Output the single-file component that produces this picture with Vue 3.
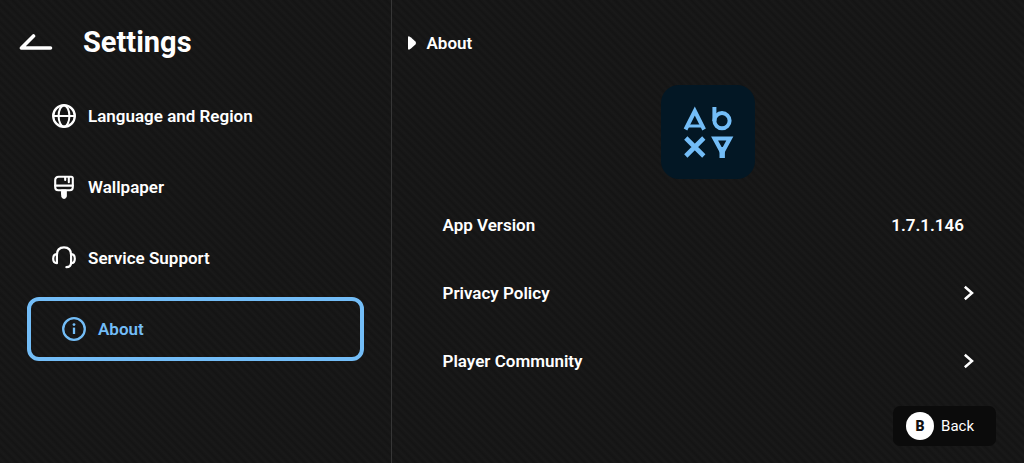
<script setup>
import { ref } from 'vue'

const items = [
  { id: 'language', label: 'Language and Region' },
  { id: 'wallpaper', label: 'Wallpaper' },
  { id: 'support', label: 'Service Support' },
  { id: 'about', label: 'About' },
]
const links = ['Privacy Policy', 'Player Community']
const selected = ref('about')
</script>

<template>
  <div class="screen">
    <aside class="sidebar">
      <header class="heading">
        <button class="back-arrow" type="button" aria-label="Go back">
          <svg width="34" height="18" viewBox="0 0 34 18" fill="none" stroke="currentColor" stroke-width="3.6" stroke-linecap="round" stroke-linejoin="round">
            <path d="M14.5 3 2.5 15H31.5" />
          </svg>
        </button>
        <h1>Settings</h1>
      </header>
      <nav class="menu" aria-label="Settings">
        <button
          v-for="item in items"
          :key="item.id"
          type="button"
          class="menu-item"
          :class="{ active: item.id === selected }"
          @click="selected = item.id"
        >
          <svg class="icon" viewBox="0 0 24 24" fill="none" stroke="currentColor" stroke-width="2.3" stroke-linecap="round" stroke-linejoin="round" aria-hidden="true">
            <g v-if="item.id === 'language'" stroke-width="2">
              <circle cx="12" cy="12" r="10.8" stroke-width="2.3" />
              <ellipse cx="12" cy="12" rx="5.4" ry="10.6" />
              <path d="M1.5 12H22.5" />
            </g>
            <g v-else-if="item.id === 'wallpaper'">
              <path d="M6.8 1.7H19.2Q20.8 1.7 20.8 3.3V12.2Q20.8 15.2 17.8 15.2H6.2Q3.2 15.2 3.2 12.2V5.3Q3.2 1.7 6.8 1.7Z" stroke-width="2.1" />
              <path d="M3.2 10.6H20.8M16.8 2V7.2M13.2 2V5" stroke-width="2.1" />
              <path d="M9.7 15H14.3V21.2Q14.3 23.4 12 23.4T9.7 21.2Z" fill="currentColor" stroke-width="1" />
            </g>
            <g v-else-if="item.id === 'support'" stroke-width="2.2">
              <path d="M4.9 8.2V17.2C2.4 17.2 1.2 15.8 1.2 12.7S2.4 8.2 4.9 8.2ZM19.1 8.2V17.2C21.6 17.2 22.8 15.8 22.8 12.7S21.6 8.2 19.1 8.2Z" />
              <path d="M4.9 9C4.9 4 7.7 1.4 12 1.4S19.1 4 19.1 9M19.1 16.5C19.1 19.6 17.2 21.2 14.4 21.2" />
            </g>
            <g v-else>
              <circle cx="12" cy="12" r="10.8" />
              <path d="M12 10.6V17" stroke-linecap="butt" />
              <circle cx="12" cy="7.6" r="1.4" fill="currentColor" stroke="none" />
            </g>
          </svg>
          <span>{{ item.label }}</span>
        </button>
      </nav>
    </aside>

    <main class="content">
      <h2>
        <svg width="10" height="14" viewBox="0 0 10 14" fill="currentColor" aria-hidden="true">
          <path d="M1 1.4Q1 0 2.4 .5L4 1.6 8.4 5.6Q9.8 7 8.4 8.4L4 12.4 2.4 13.5Q1 14 1 12.6Z" />
        </svg>
        About
      </h2>
      <svg class="logo" viewBox="0 0 94 94" fill="none" stroke="#73bdf7" role="img" aria-label="App logo">
        <g stroke-width="4">
          <path d="M24.5 44.5 33.8 26 43.1 44.5" />
          <path d="M27 41H40.6" stroke-width="3" />
          <path d="M53.4 22V36" />
          <circle cx="61" cy="35.7" r="7.6" />
        </g>
        <path d="M24.8 53 42.8 71M42.8 53 24.8 71" stroke-width="4.6" />
        <path d="M53.6 53.5H68.8L61.2 67.5Z" stroke-width="4.2" />
        <path d="M61.2 62V73" stroke-width="5.4" />
      </svg>
      <div class="rows">
        <div class="row">
          <span>App Version</span>
          <span class="version">1.7.1.146</span>
        </div>
        <button v-for="link in links" :key="link" type="button" class="row">
          <span>{{ link }}</span>
          <svg width="10" height="16" viewBox="0 0 10 16" fill="none" stroke="currentColor" stroke-width="2.5" aria-hidden="true">
            <path d="M.8 1.8 8 8 .8 14.2" />
          </svg>
        </button>
      </div>
      <footer>
        <button type="button" class="back">
          <span class="key">B</span>
          <span>Back</span>
        </button>
      </footer>
    </main>
  </div>
</template>

<style>
body {
  margin: 0;
  background: #151515;
}
</style>

<style scoped>
.screen {
  display: grid;
  grid-template-columns: 13fr 21fr;
  min-height: 100vh;
  box-sizing: border-box;
  color: #fff;
  background: repeating-linear-gradient(45deg, #141414 0, #191919 3px, #141414 6px);
  font-family: Roboto, "Liberation Sans", sans-serif;
  font-size: 17px;
  font-weight: 600;
  line-height: 24px;
}
button {
  padding: 0;
  border: 0;
  background: none;
  color: inherit;
  font: inherit;
  text-align: left;
  cursor: pointer;
}
h1,
h2 {
  margin: 0;
}
svg {
  display: block;
  flex: none;
}
.sidebar {
  box-sizing: border-box;
  border-right: 1px solid #353535;
  padding: 24px 27px 0;
}
.heading {
  display: flex;
  align-items: center;
  gap: 30px;
  margin-left: -8px;
}
h1 {
  font-size: 29px;
  font-weight: 700;
  line-height: 36px;
}
.menu {
  display: flex;
  flex-direction: column;
  gap: 7px;
  margin-top: 24px;
}
.menu-item {
  display: flex;
  align-items: center;
  gap: 12px;
  height: 64px;
  padding-left: 25px;
  border-radius: 12px;
}
.menu-item.active {
  padding-left: 31px;
  border: 4px solid #73bdf7;
  color: #73bdf7;
}
.icon {
  width: 24px;
  height: 24px;
  overflow: visible;
}
.content {
  display: flex;
  flex-direction: column;
  padding: 31px 28px 17px 15px;
}
h2 {
  display: flex;
  align-items: center;
  gap: 10px;
  font-size: 17px;
  font-weight: 600;
}
.logo {
  align-self: center;
  width: 94px;
  height: 94px;
  margin-top: 30px;
  margin-left: 13px;
  border-radius: 18px;
  background: #031724;
}
.rows {
  display: flex;
  flex-direction: column;
  gap: 24px;
  margin: 24px 22px 0 36px;
}
.row {
  display: flex;
  align-items: center;
  justify-content: space-between;
  height: 44px;
}
.version {
  margin-right: 10px;
}
footer {
  display: flex;
  justify-content: flex-end;
  margin-top: auto;
}
.back {
  display: flex;
  align-items: center;
  gap: 7px;
  height: 40px;
  padding: 0 22px 0 13px;
  border-radius: 7px;
  background: #0b0b0b;
  font-size: 15px;
  font-weight: 400;
}
.key {
  width: 28px;
  border-radius: 50%;
  background: #fff;
  color: #111;
  font-size: 14px;
  font-weight: 900;
  line-height: 28px;
  text-align: center;
}
</style>
